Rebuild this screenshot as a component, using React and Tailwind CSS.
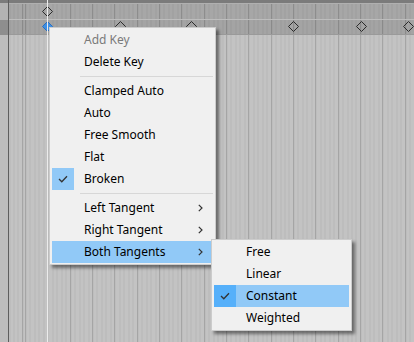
import React from 'react';

const gridBg =
  'bg-[image:repeating-linear-gradient(90deg,rgba(0,0,0,0.13)_0_1px,transparent_1px_22.33px),repeating-linear-gradient(90deg,rgba(0,0,0,0.03)_0_2px,transparent_2px_4.466px)] bg-[position:16px_0]';

const mainItems = [
  { label: 'Add Key', disabled: true },
  { label: 'Delete Key' },
  { sep: true },
  { label: 'Clamped Auto' },
  { label: 'Auto' },
  { label: 'Free Smooth' },
  { label: 'Flat' },
  { label: 'Broken', checked: true },
  { sep: true },
  { label: 'Left Tangent', sub: true },
  { label: 'Right Tangent', sub: true },
  { label: 'Both Tangents', sub: true, active: true },
];

const subItems = [
  { label: 'Free' },
  { label: 'Linear' },
  { label: 'Constant', checked: true, active: true },
  { label: 'Weighted' },
];

// diamonds on the curve row, x is page coordinate
const keys = [120, 191, 293, 361, 408];

const Check = () => (
  <svg width="10" height="8" viewBox="0 0 10 8" fill="none">
    <polyline points="1,4 3.8,6.8 9,1.2" stroke="#333" strokeWidth="1.3" />
  </svg>
);

const Chevron = () => (
  <svg width="5" height="8" viewBox="0 0 5 8" fill="none">
    <polyline points="0.8,0.8 4,4 0.8,7.2" stroke="#333" strokeWidth="1.2" />
  </svg>
);

const Diamond = ({ blue }) => (
  <svg width="11" height="11" viewBox="0 0 11 11">
    <polygon
      points="5.5,0.5 10.5,5.5 5.5,10.5 0.5,5.5"
      fill={blue ? '#3f8fe3' : 'none'}
      stroke={blue ? '#2a6fc0' : '#2b2b2b'}
      strokeWidth="1"
    />
  </svg>
);

const MenuRow = ({ item }) => {
  if (item.sep) {
    return (
      <div className="h-[7px] flex items-center pl-[28px]">
        <div className="h-px w-full bg-[#d7d7d7]" />
      </div>
    );
  }
  return (
    <div className={`h-[22px] flex items-center ${item.active ? 'bg-[#91c9f7]' : ''}`}>
      <div
        className={`w-[22px] h-[22px] flex items-center justify-center shrink-0 ${
          item.checked ? (item.active ? 'bg-[#56b0fa]' : 'bg-[#91c9f7]') : ''
        }`}
      >
        {item.checked && <Check />}
      </div>
      <span className={`ml-[10px] flex-1 ${item.disabled ? 'text-[#7a7a7a]' : 'text-black'}`}>
        {item.label}
      </span>
      {item.sub && (
        <span className="mr-[10px] flex items-center">
          <Chevron />
        </span>
      )}
    </div>
  );
};

const Menu = ({ items, className }) => (
  <div
    className={`absolute bg-[#f0f0f0] border border-[#cccccc] shadow-[3px_3px_3px_rgba(0,0,0,0.45)] px-[2px] py-px ${className}`}
  >
    {items.map((item, i) => (
      <MenuRow key={i} item={item} />
    ))}
  </div>
);

export default function App() {
  return (
    <div
      className="relative w-[414px] h-[342px] overflow-hidden flex bg-[#c2c2c2] text-[12px] leading-none"
      style={{ fontFamily: '"Noto Sans", "Open Sans", sans-serif' }}
    >
      <div className="w-[8px] flex flex-col shrink-0">
        <div className="h-[3px] bg-[#7b7b7b]" />
        <div className="h-[17px] bg-[#b3b3b3]" />
        <div className="h-[15px] bg-[#8e8e8e]" />
        <div className="flex-1 bg-[#bdbdbd]" />
      </div>
      <div className="w-px bg-[#5e5e5e] shrink-0" />

      <div className="relative flex-1 flex flex-col">
        <div className="h-[3px] bg-[#7b7b7b]" />
        <div className={`h-[16px] bg-[#a7a7a7] border-t border-[#b0b0b0] ${gridBg}`} />
        <div className="h-px bg-[#bdbdbd]" />
        <div className={`h-[15px] bg-[#a4a4a4] border-b border-[#9a9a9a] ${gridBg}`} />
        <div className={`flex-1 bg-[#c3c3c3] ${gridBg}`} />

        {/* key on the top row */}
        <div className="absolute left-[33px] top-[6px]">
          <Diamond />
        </div>
        {/* selected key */}
        <div className="absolute left-[33px] top-[21px]">
          <Diamond blue />
        </div>
        {keys.map((x) => (
          <div key={x} className="absolute top-[21px]" style={{ left: x - 9 - 5 }}>
            <Diamond />
          </div>
        ))}

        {/* playhead */}
        <div className="absolute left-[38px] top-0 bottom-0 w-px bg-[#ececec]" />
      </div>

      <Menu items={mainItems} className="left-[49px] top-[27px] w-[167px]" />
      <Menu items={subItems} className="left-[211px] top-[239px] w-[141px]" />
    </div>
  );
}
